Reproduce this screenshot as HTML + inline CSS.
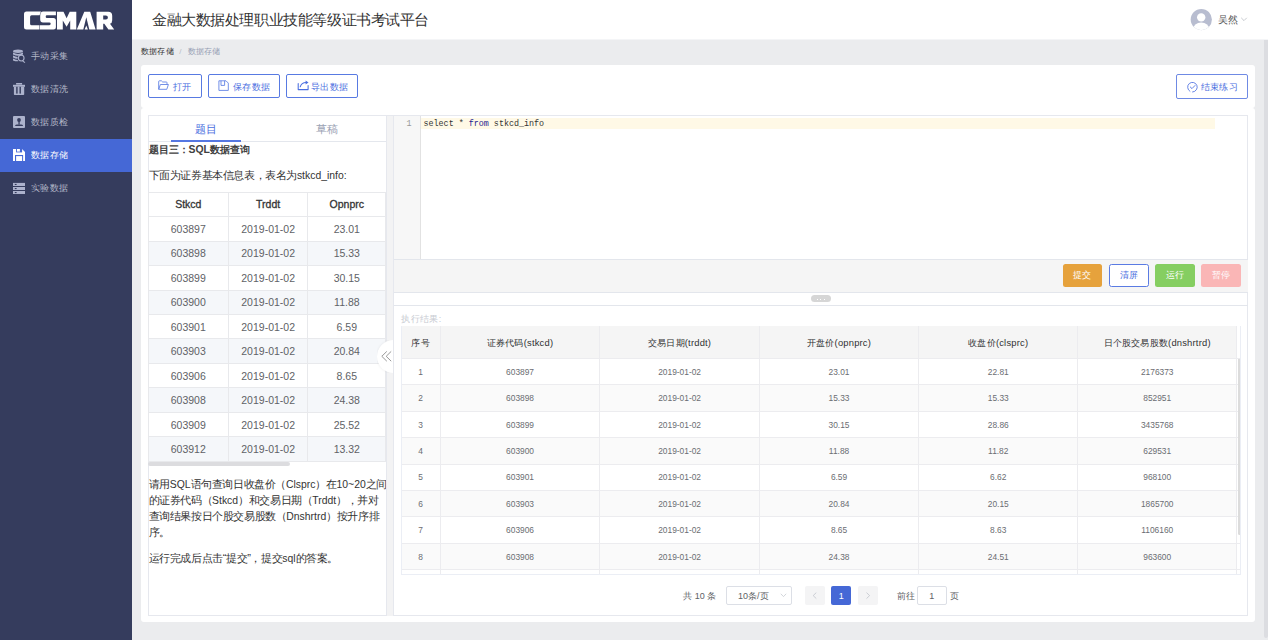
<!DOCTYPE html>
<html><head><meta charset="utf-8">
<style>
*{box-sizing:border-box;margin:0;padding:0}
html,body{width:1268px;height:640px;overflow:hidden;background:#ebecee;font-family:"Liberation Sans",sans-serif;color:#333;position:relative}
.a{position:absolute}
#side{position:absolute;left:0;top:0;width:132px;height:640px;background:#353c5d}
.mi{position:absolute;left:0;width:132px;height:33px;color:#b4b8c8;font-size:9px;letter-spacing:0.35px;line-height:32.6px}
.mi span{position:absolute;left:31px;top:0}
.mi.act{background:#4568d6;color:#fff}
#hdr{position:absolute;left:132px;top:0;width:1136px;height:40px;background:linear-gradient(#fff 0,#fff 38.5px,#f4f5f7 39.5px,#eeeff1 40px)}
#title{position:absolute;left:20px;top:11px;font-size:15px;letter-spacing:-0.42px;line-height:18px;color:#333;white-space:nowrap}
#sbar{position:absolute;left:1264px;top:40px;width:4px;height:598px;background:#dcdde1;border-radius:0 0 2px 2px}
#bc{position:absolute;left:141px;top:45.5px;font-size:8px;letter-spacing:0.2px;line-height:12px;color:#333;white-space:nowrap}
#bc .sep{color:#b8bcc4;margin:0 6.2px 0 5.4px}
#bc .cur{color:#97a0b4}
.card{position:absolute;left:141px;width:1114px;background:#fff;border-radius:3px}
.btn{position:absolute;height:24px;border:1px solid #587ae2;border-radius:2px;color:#4a6ee0;font-size:9px;letter-spacing:0.3px;line-height:24px;background:#fff;white-space:nowrap}
.btn svg{position:absolute}
.btn span{position:absolute;top:0}

#box{position:absolute;left:148px;top:115px;width:1100px;height:501px;border:1px solid #e6e8ee}
#lp{position:absolute;left:148px;top:115px;width:238.5px;height:501px;border-right:1px solid #e6e8ee;overflow:hidden}
.tab{position:absolute;top:0;height:26px;width:119px;text-align:center;font-size:10.5px;line-height:28px}
.q{position:absolute;left:0.5px;white-space:nowrap}
table.lt{position:absolute;left:-0.5px;top:76.8px;border-collapse:collapse;width:238px;table-layout:fixed}
table.lt td,table.lt th{height:24.46px;border:1px solid #e8e9ec;text-align:center;font-size:10.5px;color:#606266;padding:0}
table.lt th{font-weight:normal;color:#333;font-size:10.5px;-webkit-text-stroke:0.3px #333;height:24.4px}
table.lt tr:nth-child(odd) td{background:#f5f7fa}
.lat{font-size:10.4px;letter-spacing:0;line-height:10px}
.para{position:absolute;left:0.5px;width:237px;font-size:11px;letter-spacing:-0.4px;line-height:16px;color:#333}

#sep{position:absolute;left:386.5px;top:115.5px;width:7.5px;height:500px;background:#f3f3f4;border-right:1px solid #e6e8ee}
#gut{position:absolute;left:394px;top:116px;width:26.6px;height:143.1px;background:#f7f7f7;border-right:1px solid #e2e2e2}
#hl{position:absolute;left:421px;top:117.9px;width:793.6px;height:10.9px;background:#fff9e6}
#code{position:absolute;left:423.5px;top:118.5px;font-family:"Liberation Mono",monospace;font-size:8.4px;line-height:11px;color:#333;white-space:pre}
#code b{font-weight:normal;color:#1c1c90}
#tb{position:absolute;left:394px;top:259.1px;width:853.5px;height:33.5px;background:#f5f5f5;border-top:1px solid #e3e6ec;border-bottom:1px solid #e3e6ec}
.eb{position:absolute;top:263.9px;height:23px;width:39.5px;border-radius:2.5px;font-size:9.2px;line-height:23px;text-align:center;color:#fff}
#res{position:absolute;left:394px;top:305px;width:853.5px;height:311px;border-top:1px solid #e3e6ec}
table.rt{position:absolute;left:401.25px;top:325.6px;border-collapse:collapse;table-layout:fixed}
table.rt td,table.rt th{border-right:1px solid #ececef;border-bottom:1px solid #ececef;text-align:center;padding:0;overflow:hidden;white-space:nowrap}
table.rt th{height:33px;background:#f5f5f5;font-weight:normal;font-size:9.4px;letter-spacing:0.2px;color:#303133;padding-top:4px}
table.rt td{height:26.4px;font-size:8.4px;color:#6b6d72}
table.rt tr:nth-child(odd) td{background:#fafafa}
.pg{position:absolute;top:586.3px;height:18.3px;font-size:9px;line-height:21px}
</style></head><body>
<div id="side">
  <svg class="a" style="left:0;top:0" width="132" height="40" viewBox="0 0 132 40">
    <g fill="#fff">
      <path fill-rule="evenodd" d="M26.5 11.56H40.9L39.6 15.3H31.6Q30.1 15.3 30.1 16.8V23.7Q30.1 25.2 31.6 25.2H39.5V29.5H26.5Q24 29.5 24 27V14.06Q24 11.56 26.5 11.56Z"/>
      <path d="M43.2 11.56H55.9V15.3H46.9Q45.7 15.3 45.7 16.7Q45.7 18.1 46.9 18.1H53.4Q55.9 18.1 55.9 20.6V27Q55.9 29.5 53.4 29.5H40V25.2H49.3Q50.7 25.2 50.7 23.8Q50.7 22.4 49.3 22.4H43Q40.2 22.4 40.2 19.2V15.8Q40.2 11.56 43.2 11.56Z"/>
      <path d="M57 11.7H63.5L66.6 18.2L69.7 11.7H76.3V29.5H70.2V20.5L66.6 26.8L62.8 20.5V29.5H57Z"/>
      <path d="M84.3 11.7H90.2L95.6 29.5H89.3L86.3 17.3L83.3 29.5H76.8Z"/>
      <path d="M84.6 29.5L86.3 25.5L87.9 29.5Z"/>
      <path fill-rule="evenodd" d="M96.6 11.7H108.2Q112.2 11.7 112.2 15.7V20.2Q112.2 23.1 110 23.8L114.2 29.5H108.4L104.3 23.8H103.2V29.5H96.6ZM103.2 15.4V19.5H105.9Q107.9 19.5 107.9 17.45Q107.9 15.4 105.9 15.4Z"/>
    </g>
  </svg>
  <div class="mi" style="top:40px">
    <svg class="a" style="left:0;top:0" width="30" height="33" viewBox="0 40 30 33">
      <g fill="#acb2cc">
        <ellipse cx="18" cy="51.2" rx="5" ry="1.7"/>
        <path d="M13 52.6Q18 55.2 23 52.6V54.4Q18 57 13 54.4Z"/>
        <path d="M13 55.6Q15.5 57 17.6 57.1L17.5 58.7Q15 58.5 13 57.4Z"/>
        <path d="M13 58.6Q15 59.7 17.6 59.9L18.3 61.3Q15.2 61.4 13 60.4Z"/>
        <circle cx="21.2" cy="58.1" r="3.4"/>
        <path d="M23 60.6L25.3 62.3L24.5 63L22.3 61.2Z"/>
      </g>
      <circle cx="21.2" cy="58.1" r="2.3" fill="#353c5d"/>
    </svg>
    <span>手动采集</span></div>
  <div class="mi" style="top:73px">
    <svg class="a" style="left:0;top:0" width="30" height="33" viewBox="0 73 30 33">
      <g fill="#acb2cc">
        <rect x="16.1" y="83" width="6" height="1.6"/>
        <rect x="13" y="84.8" width="12" height="2"/>
        <path d="M13.9 86.8H24.2V94.2Q24.2 95 23.4 95H14.7Q13.9 95 13.9 94.2Z"/>
      </g>
      <g fill="#353c5d"><rect x="16.2" y="86.8" width="1.4" height="6.8"/><rect x="19.5" y="86.8" width="1.4" height="6.8"/></g>
    </svg>
    <span>数据清洗</span></div>
  <div class="mi" style="top:106px">
    <svg class="a" style="left:0;top:0" width="30" height="33" viewBox="0 106 30 33">
      <rect x="13" y="116" width="12" height="12" rx="1" fill="#acb2cc"/>
      <g fill="#353c5d"><circle cx="19" cy="120" r="1.9"/><rect x="18.4" y="120" width="1.3" height="4.6"/><path d="M15.2 126V125.2Q15.6 124.4 17 124.4H21.1Q22.5 124.4 22.9 125.2V126Z"/></g>
    </svg>
    <span>数据质检</span></div>
  <div class="mi act" style="top:139px">
    <svg class="a" style="left:0;top:0" width="30" height="33" viewBox="0 139 30 33">
      <path fill="#fff" d="M13 149H22L25 152V161H13Z"/>
      <g fill="#4568d6"><rect x="16.1" y="149" width="6" height="3.4"/><rect x="15" y="155" width="8.1" height="6"/></g>
      <g fill="#fff"><rect x="17" y="149" width="2.9" height="2.6"/><rect x="16.1" y="156.1" width="6" height="4.9"/></g>
    </svg>
    <span>数据存储</span></div>
  <div class="mi" style="top:172px">
    <svg class="a" style="left:0;top:0" width="30" height="33" viewBox="0 172 30 33">
      <g fill="#acb2cc"><rect x="13" y="182.9" width="12" height="3.1"/><rect x="13" y="187" width="12" height="3"/><rect x="13" y="191" width="12" height="3"/></g>
      <g fill="#353c5d"><rect x="14.8" y="183.9" width="1.8" height="1.1"/><rect x="14.8" y="188" width="1.8" height="1.1"/><rect x="14.8" y="192" width="1.8" height="1.1"/></g>
    </svg>
    <span>实验数据</span></div>
</div>
<div id="hdr">
  <div id="title">金融大数据处理职业技能等级证书考试平台</div>
  <svg class="a" style="left:1058px;top:8px" width="22" height="23" viewBox="1190 8 22 23">
    <defs><clipPath id="avc"><circle cx="1201.3" cy="19.6" r="10.6"/></clipPath></defs>
    <circle cx="1201.3" cy="19.6" r="10.6" fill="#b8bdd0"/>
    <g clip-path="url(#avc)" fill="#fff"><circle cx="1201.2" cy="17.4" r="4.2"/><ellipse cx="1201.2" cy="29.6" rx="8.2" ry="7.2"/></g>
  </svg>
  <div class="a" style="left:1086px;top:13px;font-size:9.5px;line-height:14px;color:#555;white-space:nowrap">吴然</div>
  <svg class="a" style="left:1108px;top:16px" width="8" height="6" viewBox="1240 16 8 6"><path d="M1241.2 17.8L1244 20.6L1246.8 17.8" fill="none" stroke="#b0b4bc" stroke-width="0.7"/></svg>
</div>
<div id="sbar"></div>
<div id="bc">数据存储<span class="sep">/</span><span class="cur">数据存储</span></div>
<div class="card" style="top:65px;height:43.3px"></div>
<div class="card" style="top:108.3px;height:513.4px"></div>
<div class="btn" style="left:148px;top:74px;width:53.7px">
  <svg style="left:-0.8px;top:-0.8px" width="54" height="24" viewBox="148 74 54 24"><g fill="none" stroke="#5a7ce3" stroke-width="0.85" stroke-linejoin="round"><path d="M158.7 89.3V81.5Q158.7 80.8 159.4 80.8H161.4L162.7 82H166.3Q167 82 167 82.7V84.3"/><path d="M158.7 89.3L160.4 84.5H168.4L166.8 89.3Z"/></g></svg>
  <span style="left:23.5px">打开</span></div>
<div class="btn" style="left:208px;top:74px;width:71.8px">
  <svg style="left:-1px;top:-0.8px" width="72" height="24" viewBox="208 74 72 24"><g fill="none" stroke="#5a7ce3" stroke-width="0.85" stroke-linejoin="miter"><path d="M218.9 80.8H226L228.3 83.1V90.4H218.9Z"/><path d="M221 80.8V85.4H224.6V80.8"/></g></svg>
  <span style="left:24.2px">保存数据</span></div>
<div class="btn" style="left:286.4px;top:74px;width:72px">
  <svg style="left:-0.5px;top:-0.8px" width="72" height="24" viewBox="286.4 74 72 24"><g fill="none" stroke="#4a6ee0" stroke-width="1.05" stroke-linecap="round" stroke-linejoin="round"><path d="M297.6 83.6V89.6H307.5V85.6"/><path d="M299.6 86.8Q300.8 82.8 305.6 82.6"/></g><path d="M305 80.6L307.9 82.6L305 84.6Z" fill="#4a6ee0"/></svg>
  <span style="left:23.6px">导出数据</span></div>
<div class="btn" style="left:1176.3px;top:74.3px;width:71.5px;height:24.5px;border-color:#6f8ae4">
  <svg style="left:0;top:-0.8px" width="72" height="24" viewBox="1176.3 74.3 72 24"><g fill="none" stroke="#4a6ee0" stroke-width="0.85" stroke-linecap="round"><path d="M1189.2 90.6A4.8 4.8 0 1 1 1191.9 91.3"/><path d="M1189.6 86.3L1191.3 87.9L1194.3 84.8"/></g></svg>
  <span style="left:23.5px">结束练习</span></div>
<div id="box"></div>
<div id="lp">
  <div class="a" style="left:0;top:0;width:238px;height:26.8px;border-bottom:1px solid #e4e7ed"></div>
  <div class="tab" style="left:0;color:#4a6ee0;padding-right:2.6px">题目</div>
  <div class="tab" style="left:119px;color:#9aa2b4;padding-left:1.6px">草稿</div>
  <div class="a" style="left:23px;top:25.3px;width:70px;height:1.5px;background:#5577e2"></div>
  <div class="q" style="top:27.5px;font-size:10.4px;line-height:14px;font-weight:bold;color:#404040">题目三：SQL数据查询</div>
  <div class="q" style="top:52.8px;font-size:11px;letter-spacing:-0.4px;line-height:14px;color:#333">下面为证券基本信息表，表名为<span class="lat">stkcd_info:</span></div>
  <table class="lt"><colgroup><col style="width:80.6px"><col style="width:79.1px"><col style="width:78.3px"></colgroup>
  <tr><th>Stkcd</th><th>Trddt</th><th>Opnprc</th></tr><tr><td>603897</td><td>2019-01-02</td><td>23.01</td></tr><tr><td>603898</td><td>2019-01-02</td><td>15.33</td></tr><tr><td>603899</td><td>2019-01-02</td><td>30.15</td></tr><tr><td>603900</td><td>2019-01-02</td><td>11.88</td></tr><tr><td>603901</td><td>2019-01-02</td><td>6.59</td></tr><tr><td>603903</td><td>2019-01-02</td><td>20.84</td></tr><tr><td>603906</td><td>2019-01-02</td><td>8.65</td></tr><tr><td>603908</td><td>2019-01-02</td><td>24.38</td></tr><tr><td>603909</td><td>2019-01-02</td><td>25.52</td></tr><tr><td>603912</td><td>2019-01-02</td><td>13.32</td></tr></table>
  <div class="a" style="left:0;top:346.5px;width:141.6px;height:4.5px;background:#dcdcdf;border-radius:2px"></div>
  <div class="para" style="top:360.6px;white-space:nowrap">请用<span class="lat">SQL</span>语句查询日收盘价（<span class="lat">Clsprc</span>）在<span class="lat">10~20</span>之间<br>的证券代码（<span class="lat">Stkcd</span>）和交易日期（<span class="lat">Trddt</span>），并对<br>查询结果按日个股交易股数（<span class="lat">Dnshrtrd</span>）按升序排<br>序。</div>
  <div class="para" style="top:434.6px;white-space:nowrap">运行完成后点击“提交”，提交<span class="lat">sql</span>的答案。</div>
</div>
<div id="sep"></div>
<div id="gut"><div class="a" style="left:12.5px;top:2.5px;font-family:'Liberation Mono',monospace;font-size:8.4px;line-height:11px;color:#999">1</div></div>
<div id="hl"></div>
<div id="code">select * <b>from</b> stkcd_info</div>
<div id="tb"></div>
<div class="eb" style="left:1062.7px;background:#e6a23c">提交</div>
<div class="eb" style="left:1109.2px;background:#fff;border:1px solid #5a7be3;color:#4a6ee0;line-height:21px">清屏</div>
<div class="eb" style="left:1155px;background:#85ce61">运行</div>
<div class="eb" style="left:1201.2px;background:#fab6b6">暂停</div>
<div class="a" style="left:811.2px;top:294.5px;width:19.6px;height:7.9px;border-radius:4px;background:#d6d6d6"></div>
<div class="a" style="left:816.8px;top:298.5px;width:1.3px;height:1.3px;background:#fff"></div>
<div class="a" style="left:820.1px;top:298.5px;width:1.3px;height:1.3px;background:#fff"></div>
<div class="a" style="left:823.5px;top:298.5px;width:1.3px;height:1.3px;background:#fff"></div>
<div id="res"></div>
<div class="a" style="left:401.2px;top:312.5px;font-size:9px;letter-spacing:0.4px;line-height:12px;color:#c8cbd2">执行结果:</div>
<div class="a" style="left:401.25px;top:325.6px;width:840px;height:249.3px;overflow:hidden;border-left:1px solid #ebeef5;border-bottom:1px solid #ebeef5;border-right:1px solid #ebeef5">
<table class="rt" style="left:-1px;top:0;width:839.35px"><colgroup><col style="width:39.2px"><col style="width:159.25px"><col style="width:159.8px"><col style="width:159.1px"><col style="width:159.4px"><col style="width:158.5px"><col style="width:4.1px"></colgroup>
<tr><th>序号</th><th>证券代码(stkcd)</th><th>交易日期(trddt)</th><th>开盘价(opnprc)</th><th>收盘价(clsprc)</th><th>日个股交易股数(dnshrtrd)</th><th style="background:#fff;border-right:0"></th></tr>
<tr><td>1</td><td>603897</td><td>2019-01-02</td><td>23.01</td><td>22.81</td><td>2176373</td><td style="border-right:0;background:#fff"></td></tr><tr><td>2</td><td>603898</td><td>2019-01-02</td><td>15.33</td><td>15.33</td><td>852951</td><td style="border-right:0;background:#fff"></td></tr><tr><td>3</td><td>603899</td><td>2019-01-02</td><td>30.15</td><td>28.86</td><td>3435768</td><td style="border-right:0;background:#fff"></td></tr><tr><td>4</td><td>603900</td><td>2019-01-02</td><td>11.88</td><td>11.82</td><td>629531</td><td style="border-right:0;background:#fff"></td></tr><tr><td>5</td><td>603901</td><td>2019-01-02</td><td>6.59</td><td>6.62</td><td>968100</td><td style="border-right:0;background:#fff"></td></tr><tr><td>6</td><td>603903</td><td>2019-01-02</td><td>20.84</td><td>20.15</td><td>1865700</td><td style="border-right:0;background:#fff"></td></tr><tr><td>7</td><td>603906</td><td>2019-01-02</td><td>8.65</td><td>8.63</td><td>1106160</td><td style="border-right:0;background:#fff"></td></tr><tr><td>8</td><td>603908</td><td>2019-01-02</td><td>24.38</td><td>24.51</td><td>963600</td><td style="border-right:0;background:#fff"></td></tr><tr><td>9</td><td>603909</td><td>2019-01-02</td><td>25.52</td><td>25.40</td><td>1022100</td><td style="border-right:0;background:#fff"></td></tr></table>
<div class="a" style="left:835.4px;top:33.4px;width:3.6px;height:176.5px;background:#dcdcdc;border-radius:0 0 2px 2px"></div>
</div>
<div class="pg" style="left:683.2px;color:#606266">共 10 条</div>
<div class="pg" style="left:726.1px;width:65.6px;border:1px solid #dcdfe6;border-radius:2px;color:#606266;padding-left:11px;line-height:18.5px">10条/页
  <svg class="a" style="right:3.6px;top:6px" width="7" height="5" viewBox="0 0 7 5"><path d="M0.8 0.8L3.5 3.6L6.2 0.8" fill="none" stroke="#c0c4cc" stroke-width="0.7"/></svg></div>
<div class="pg" style="left:805px;width:20px;background:#f4f4f5;border-radius:2px">
  <svg class="a" style="left:7px;top:5.5px" width="6" height="8" viewBox="0 0 6 8"><path d="M4.3 0.6L1.2 3.6L4.3 6.6" fill="none" stroke="#c0c4cc" stroke-width="0.8"/></svg></div>
<div class="pg" style="left:831.3px;width:19.8px;background:#4568d6;border-radius:2px;color:#fff;text-align:center">1</div>
<div class="pg" style="left:858px;width:20px;background:#f4f4f5;border-radius:2px">
  <svg class="a" style="left:7px;top:5.5px" width="6" height="8" viewBox="0 0 6 8"><path d="M1.5 0.6L4.6 3.6L1.5 6.6" fill="none" stroke="#c0c4cc" stroke-width="0.8"/></svg></div>
<div class="pg" style="left:897px;color:#606266">前往</div>
<div class="pg" style="left:916.7px;width:30.1px;border:1px solid #dcdfe6;border-radius:2px;text-align:center;color:#606266;line-height:18.5px">1</div>
<div class="pg" style="left:950px;color:#606266">页</div>
<div class="a" style="left:376.8px;top:339.8px;width:16.7px;height:33.2px;overflow:hidden">
  <div class="a" style="left:0;top:0;width:33.2px;height:33.2px;border-radius:50%;background:#fff;box-shadow:0 0 3px rgba(0,0,0,0.08)"></div>
  <svg class="a" style="left:0;top:0" width="17" height="34" viewBox="376.8 339.8 17 34"><g fill="none" stroke="#8c8c8c" stroke-width="0.9"><path d="M386.6 351.2L381.6 356.1L386.6 361"/><path d="M391 351.2L386 356.1L391 361"/></g></svg>
</div>
<!--CONTENT-->
</body></html>
